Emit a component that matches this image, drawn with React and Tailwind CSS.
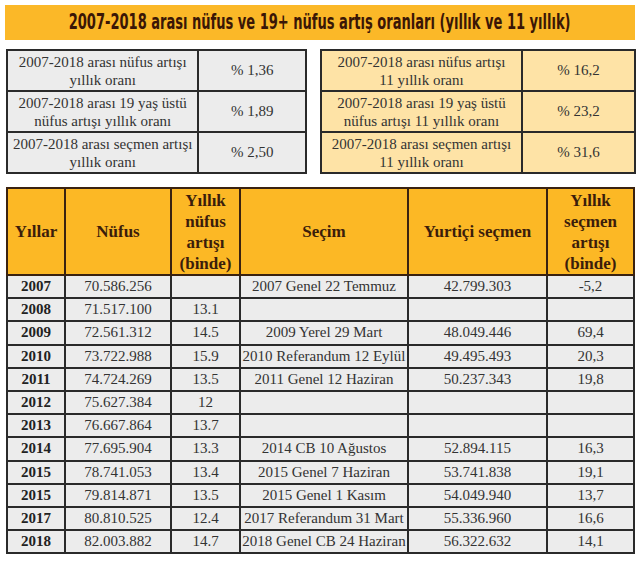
const summaryLeft = [
  { label: ['2007-2018 arası nüfus artışı', 'yıllık oranı'], value: '% 1,36' },
  { label: ['2007-2018 arası 19 yaş üstü', 'nüfus artışı yıllık oranı'], value: '% 1,89' },
  { label: ['2007-2018 arası seçmen artışı', 'yıllık oranı'], value: '% 2,50' },
]

const summaryRight = [
  { label: ['2007-2018 arası nüfus artışı', '11 yıllık oranı'], value: '% 16,2' },
  { label: ['2007-2018 arası 19 yaş üstü', 'nüfus artışı 11 yıllık oranı'], value: '% 23,2' },
  { label: ['2007-2018 arası seçmen artışı', '11 yıllık oranı'], value: '% 31,6' },
]

const rows = [
  ['2007', '70.586.256', '', '2007 Genel 22 Temmuz', '42.799.303', '-5,2'],
  ['2008', '71.517.100', '13.1', '', '', ''],
  ['2009', '72.561.312', '14.5', '2009 Yerel 29 Mart', '48.049.446', '69,4'],
  ['2010', '73.722.988', '15.9', '2010 Referandum 12 Eylül', '49.495.493', '20,3'],
  ['2011', '74.724.269', '13.5', '2011 Genel 12 Haziran', '50.237.343', '19,8'],
  ['2012', '75.627.384', '12', '', '', ''],
  ['2013', '76.667.864', '13.7', '', '', ''],
  ['2014', '77.695.904', '13.3', '2014 CB 10 Ağustos', '52.894.115', '16,3'],
  ['2015', '78.741.053', '13.4', '2015 Genel 7 Haziran', '53.741.838', '19,1'],
  ['2015', '79.814.871', '13.5', '2015 Genel 1 Kasım', '54.049.940', '13,7'],
  ['2017', '80.810.525', '12.4', '2017 Referandum 31 Mart', '55.336.960', '16,6'],
  ['2018', '82.003.882', '14.7', '2018 Genel CB 24 Haziran', '56.322.632', '14,1'],
]

function SummaryTable({ items, bg, width }) {
  return (
    <table className={`border-collapse ${bg} ${width} table-fixed font-['Liberation_Serif',serif]`}>
      <tbody>
        {items.map((it, i) => (
          <tr key={i} className="h-[41px]">
            <td className="border-2 border-[#2a2a2a] text-center align-middle leading-[18px] text-[15px] text-[#333]">
              {it.label[0]}<br />{it.label[1]}
            </td>
            <td className="w-[36%] border-2 border-[#2a2a2a] text-center align-middle text-[15px] text-[#333]">
              {it.value}
            </td>
          </tr>
        ))}
      </tbody>
    </table>
  )
}

export default function App() {
  return (
    <div className="w-[640px] h-[561px] bg-white pt-[5px] font-['Liberation_Serif',serif]">
      {/* Title */}
      <div className="ml-[5px] w-[630px] h-[35px] bg-[#fbb828] flex items-center justify-center overflow-hidden">
        <span className="inline-block font-['DejaVu_Sans_Condensed'] font-bold text-[21px] text-[#3a1606] whitespace-nowrap scale-x-[0.69]">
          2007-2018 arası nüfus ve 19+ nüfus artış oranları (yıllık ve 11 yıllık)
        </span>
      </div>

      {/* Summary */}
      <div className="flex gap-[13px] pl-[6px] mt-[9px]">
        <SummaryTable items={summaryLeft} bg="bg-[#ececec]" width="w-[301px]" />
        <SummaryTable items={summaryRight} bg="bg-[#fee3a6]" width="w-[316px]" />
      </div>

      {/* Main table */}
      <table className="ml-[6px] mt-[13px] w-[627px] table-fixed border-collapse font-['Liberation_Serif',serif]">
        <colgroup>
          <col className="w-[58px]" />
          <col className="w-[106px]" />
          <col className="w-[69px]" />
          <col className="w-[168px]" />
          <col className="w-[139px]" />
          <col className="w-[87px]" />
        </colgroup>
        <thead>
          <tr className="h-[87px] bg-[#fcb825] text-[#3b1d0b] font-bold text-[17px] leading-[21px]">
            <th className="border-2 border-[#3a2210]">Yıllar</th>
            <th className="border-2 border-[#3a2210]">Nüfus</th>
            <th className="border-2 border-[#3a2210]">Yıllık<br />nüfus<br />artışı<br />(binde)</th>
            <th className="border-2 border-[#3a2210]">Seçim</th>
            <th className="border-2 border-[#3a2210]">Yurtiçi seçmen</th>
            <th className="border-2 border-[#3a2210]">Yıllık<br />seçmen<br />artışı<br />(binde)</th>
          </tr>
        </thead>
        <tbody>
          {rows.map((r, i) => (
            <tr key={i} className="h-[23.2px] bg-[#ececec] text-[15px] text-[#333] leading-none">
              <td className="border-2 border-[#2a2a2a] text-center font-bold text-[#222]">{r[0]}</td>
              <td className="border-2 border-[#2a2a2a] text-center">{r[1]}</td>
              <td className="border-2 border-[#2a2a2a] text-center">{r[2]}</td>
              <td className="border-2 border-[#2a2a2a] text-center whitespace-nowrap">{r[3]}</td>
              <td className="border-2 border-[#2a2a2a] text-center">{r[4]}</td>
              <td className="border-2 border-[#2a2a2a] text-center">{r[5]}</td>
            </tr>
          ))}
        </tbody>
      </table>
    </div>
  )
}
